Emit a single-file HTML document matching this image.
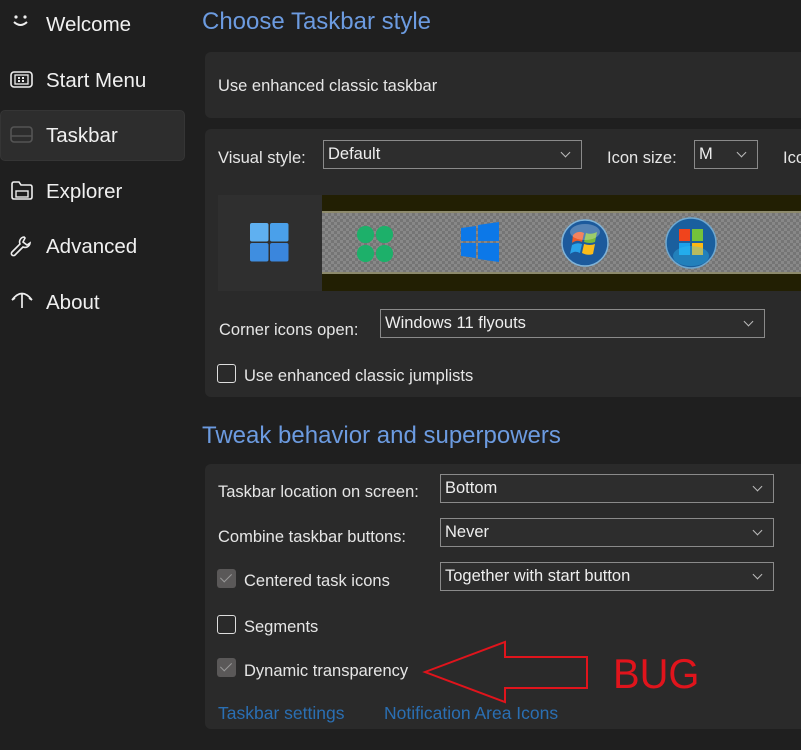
<!DOCTYPE html>
<html><head><meta charset="utf-8"><style>
body{margin:0;width:801px;height:750px;background:#1f1f1f;font-family:"Liberation Sans",sans-serif;color:#e8e8e8;position:relative;overflow:hidden}
.a{position:absolute;white-space:nowrap}
.nav{font-size:20.5px;color:#f0f0f0}
.h{font-size:24px;color:#6c9be0}
.p{position:absolute;left:205px;right:-10px;background:#2a2a2a;border-radius:6px}
.l{font-size:16.5px;color:#e6e6e6}
.dd{position:absolute;border:1px solid #8a8a8a;background:#2d2d2d;height:29px;box-sizing:border-box;font-size:16.5px;padding:0 4px;line-height:27px;color:#eee}
.dd:after{content:"";position:absolute;right:12px;top:8px;width:6px;height:6px;border-right:1.3px solid #bbb;border-bottom:1.3px solid #bbb;transform:rotate(45deg)}
.cb{position:absolute;width:19px;height:19px;box-sizing:border-box;border:1.5px solid #ddd;border-radius:3px}
.cbc{background:#5a5858;border:none}
.cbc:after{content:"";position:absolute;left:6px;top:2px;width:5px;height:10px;border-right:1.5px solid #999;border-bottom:1.5px solid #999;transform:rotate(45deg)}
.lk{font-size:17.5px;color:#2a6fb3}
</style></head><body>
<div class="a" style="left:0;top:110px;width:183px;height:49px;background:#2d2d2d;border-radius:5px;border:1px solid #353535"></div>
<svg class="a" style="left:10px;top:14px" width="22" height="14"><circle cx="6" cy="3" r="1.6" fill="#eee"/><circle cx="15" cy="3" r="1.6" fill="#eee"/><path d="M4 8 Q10.5 14 17 8" stroke="#eee" stroke-width="2" fill="none"/></svg>
<div class="a nav" style="left:46px;top:13px">Welcome</div>
<svg class="a" style="left:10px;top:71px" width="24" height="18"><rect x="1" y="1" width="21" height="15" rx="3" stroke="#eee" stroke-width="1.6" fill="none"/><rect x="5" y="4" width="13" height="9" stroke="#eee" stroke-width="1.3" fill="none"/><rect x="8" y="6" width="2" height="2" fill="#eee"/><rect x="12" y="6" width="2" height="2" fill="#eee"/><rect x="8" y="9" width="2" height="2" fill="#eee"/><rect x="12" y="9" width="2" height="2" fill="#eee"/></svg>
<div class="a nav" style="left:46px;top:69px">Start Menu</div>
<svg class="a" style="left:10px;top:126px" width="24" height="18"><rect x="1" y="1" width="21" height="15" rx="3" stroke="#555" stroke-width="1.6" fill="none"/><line x1="1" y1="10" x2="22" y2="10" stroke="#555" stroke-width="1.5"/></svg>
<div class="a nav" style="left:46px;top:124px">Taskbar</div>
<svg class="a" style="left:10px;top:180px" width="24" height="20"><path d="M2 4 Q2 2 4 2 H9 L11 5 H20 Q22 5 22 7 V17 Q22 19 20 19 H4 Q2 19 2 17 Z" stroke="#eee" stroke-width="1.6" fill="none"/><rect x="6" y="11" width="12" height="6" stroke="#eee" stroke-width="1.4" fill="none"/></svg>
<div class="a nav" style="left:46px;top:180px">Explorer</div>
<svg class="a" style="left:9px;top:234px" width="24" height="24"><path d="M15 3 a5 5 0 0 0 -4 7 L3 18 a2 2 0 0 0 3 3 L14 13 a5 5 0 0 0 7 -4 L18 11 L14 8 L16 4 Z" stroke="#eee" stroke-width="1.6" fill="none"/></svg>
<div class="a nav" style="left:46px;top:235px">Advanced</div>
<svg class="a" style="left:9px;top:290px" width="26" height="20"><path d="M3 10 Q13 -3 23 10 M13 4 L13 18 M3 10 L6 8 M23 10 L20 8" stroke="#eee" stroke-width="1.7" fill="none"/></svg>
<div class="a nav" style="left:46px;top:291px">About</div>

<div class="a h" style="left:202px;top:8px">Choose Taskbar style</div>
<div class="p" style="top:52px;height:66px"></div>
<div class="a l" style="left:218px;top:77px">Use enhanced classic taskbar</div>

<div class="p" style="top:129px;height:268px"></div>
<div class="a l" style="left:218px;top:149px">Visual style:</div>
<div class="dd" style="left:323px;top:140px;width:259px">Default</div>
<div class="a l" style="left:607px;top:149px">Icon size:</div>
<div class="dd" style="left:694px;top:140px;width:64px">M</div>
<div class="a l" style="left:783px;top:149px">Ico</div>

<div class="a" style="left:218px;top:195px;width:104px;height:96px;background:#2f2f2f"></div>
<div class="a" style="left:322px;top:195px;width:479px;height:96px;background:#221f03"></div>
<div class="a" style="left:322px;top:211px;width:479px;height:63px;background:#7e7e7e;border-top:2px solid #8d8a6c;border-bottom:2px solid #8d8a6c;box-sizing:border-box;background-image:repeating-conic-gradient(#888 0 25%,#757575 0 50%);background-size:6px 6px"></div>
<svg class="a" style="left:250px;top:223px" width="40" height="40"><rect x="0" y="0" width="18.5" height="18.5" rx="2" fill="#5fb0f0"/><rect x="20" y="0" width="18.5" height="18.5" rx="2" fill="#4aa0ea"/><rect x="0" y="20" width="18.5" height="18.5" rx="2" fill="#3f8ee0"/><rect x="20" y="20" width="18.5" height="18.5" rx="2" fill="#3a86dd"/></svg>
<svg class="a" style="left:355px;top:224px" width="40" height="40"><g fill="#1db06a"><rect x="2" y="2" width="17" height="17" rx="8"/><rect x="21" y="2" width="17" height="17" rx="8"/><rect x="2" y="21" width="17" height="17" rx="8"/><rect x="21" y="21" width="17" height="17" rx="8"/></g></svg>
<svg class="a" style="left:459px;top:222px" width="44" height="42"><path d="M2 6 L17 4 V19 H2 Z M19 3 L40 0 V19 H19 Z M2 21 H17 V36 L2 34 Z M19 21 H40 V40 L19 37 Z" fill="#0c78e8"/></svg>
<svg class="a" style="left:560px;top:218px" width="50" height="50"><circle cx="25" cy="25" r="23" fill="#1c5a9c" stroke="#7fb3d8" stroke-width="1.5"/><path d="M13 17 Q18 12 24 15 L22 24 Q17 21 12 25Z" fill="#f05a28"/><path d="M26 15 Q31 17 37 14 L35 24 Q30 26 24 24Z" fill="#7cbb3a"/><path d="M12 27 Q17 24 22 26 L20 35 Q15 32 10 36Z" fill="#2aa2e8"/><path d="M24 26 Q30 28 35 26 L33 36 Q28 38 22 35Z" fill="#fbbc1a"/><ellipse cx="25" cy="14" rx="15" ry="8" fill="#fff" opacity=".25"/></svg>
<svg class="a" style="left:664px;top:216px" width="54" height="54"><circle cx="27" cy="27" r="25" fill="#1a5f9e" stroke="#6fa8d0" stroke-width="1.5"/><rect x="15" y="13" width="11" height="12" fill="#f0441c"/><rect x="28" y="13" width="11" height="12" fill="#74c23a"/><rect x="15" y="27" width="11" height="12" fill="#1ba1ea"/><rect x="28" y="27" width="11" height="12" fill="#fdb813"/><ellipse cx="27" cy="40" rx="18" ry="10" fill="#35c0f0" opacity=".35"/></svg>

<div class="a l" style="left:219px;top:321px">Corner icons open:</div>
<div class="dd" style="left:380px;top:309px;width:385px">Windows 11 flyouts</div>
<div class="cb" style="left:217px;top:364px"></div>
<div class="a l" style="left:244px;top:367px">Use enhanced classic jumplists</div>

<div class="a h" style="left:202px;top:422px">Tweak behavior and superpowers</div>
<div class="p" style="top:464px;height:265px"></div>
<div class="a l" style="left:218px;top:483px">Taskbar location on screen:</div>
<div class="dd" style="left:440px;top:474px;width:334px">Bottom</div>
<div class="a l" style="left:218px;top:528px">Combine taskbar buttons:</div>
<div class="dd" style="left:440px;top:518px;width:334px">Never</div>
<div class="cb cbc" style="left:217px;top:569px"></div>
<div class="a l" style="left:244px;top:572px">Centered task icons</div>
<div class="dd" style="left:440px;top:562px;width:334px">Together with start button</div>
<div class="cb" style="left:217px;top:615px"></div>
<div class="a l" style="left:244px;top:618px">Segments</div>
<div class="cb cbc" style="left:217px;top:658px"></div>
<div class="a l" style="left:244px;top:662px">Dynamic transparency</div>
<div class="a lk" style="left:218px;top:703px">Taskbar settings</div>
<div class="a lk" style="left:384px;top:703px">Notification Area Icons</div>
<svg class="a" style="left:420px;top:640px" width="175" height="68"><path d="M5 32 L85 2 V17 H167 V48 H85 V62 Z" fill="none" stroke="#e0141c" stroke-width="2"/></svg>
<div class="a" style="left:613px;top:650px;font-size:42px;color:#e0141c;transform:scaleX(0.95);transform-origin:left">BUG</div>
</body></html>
